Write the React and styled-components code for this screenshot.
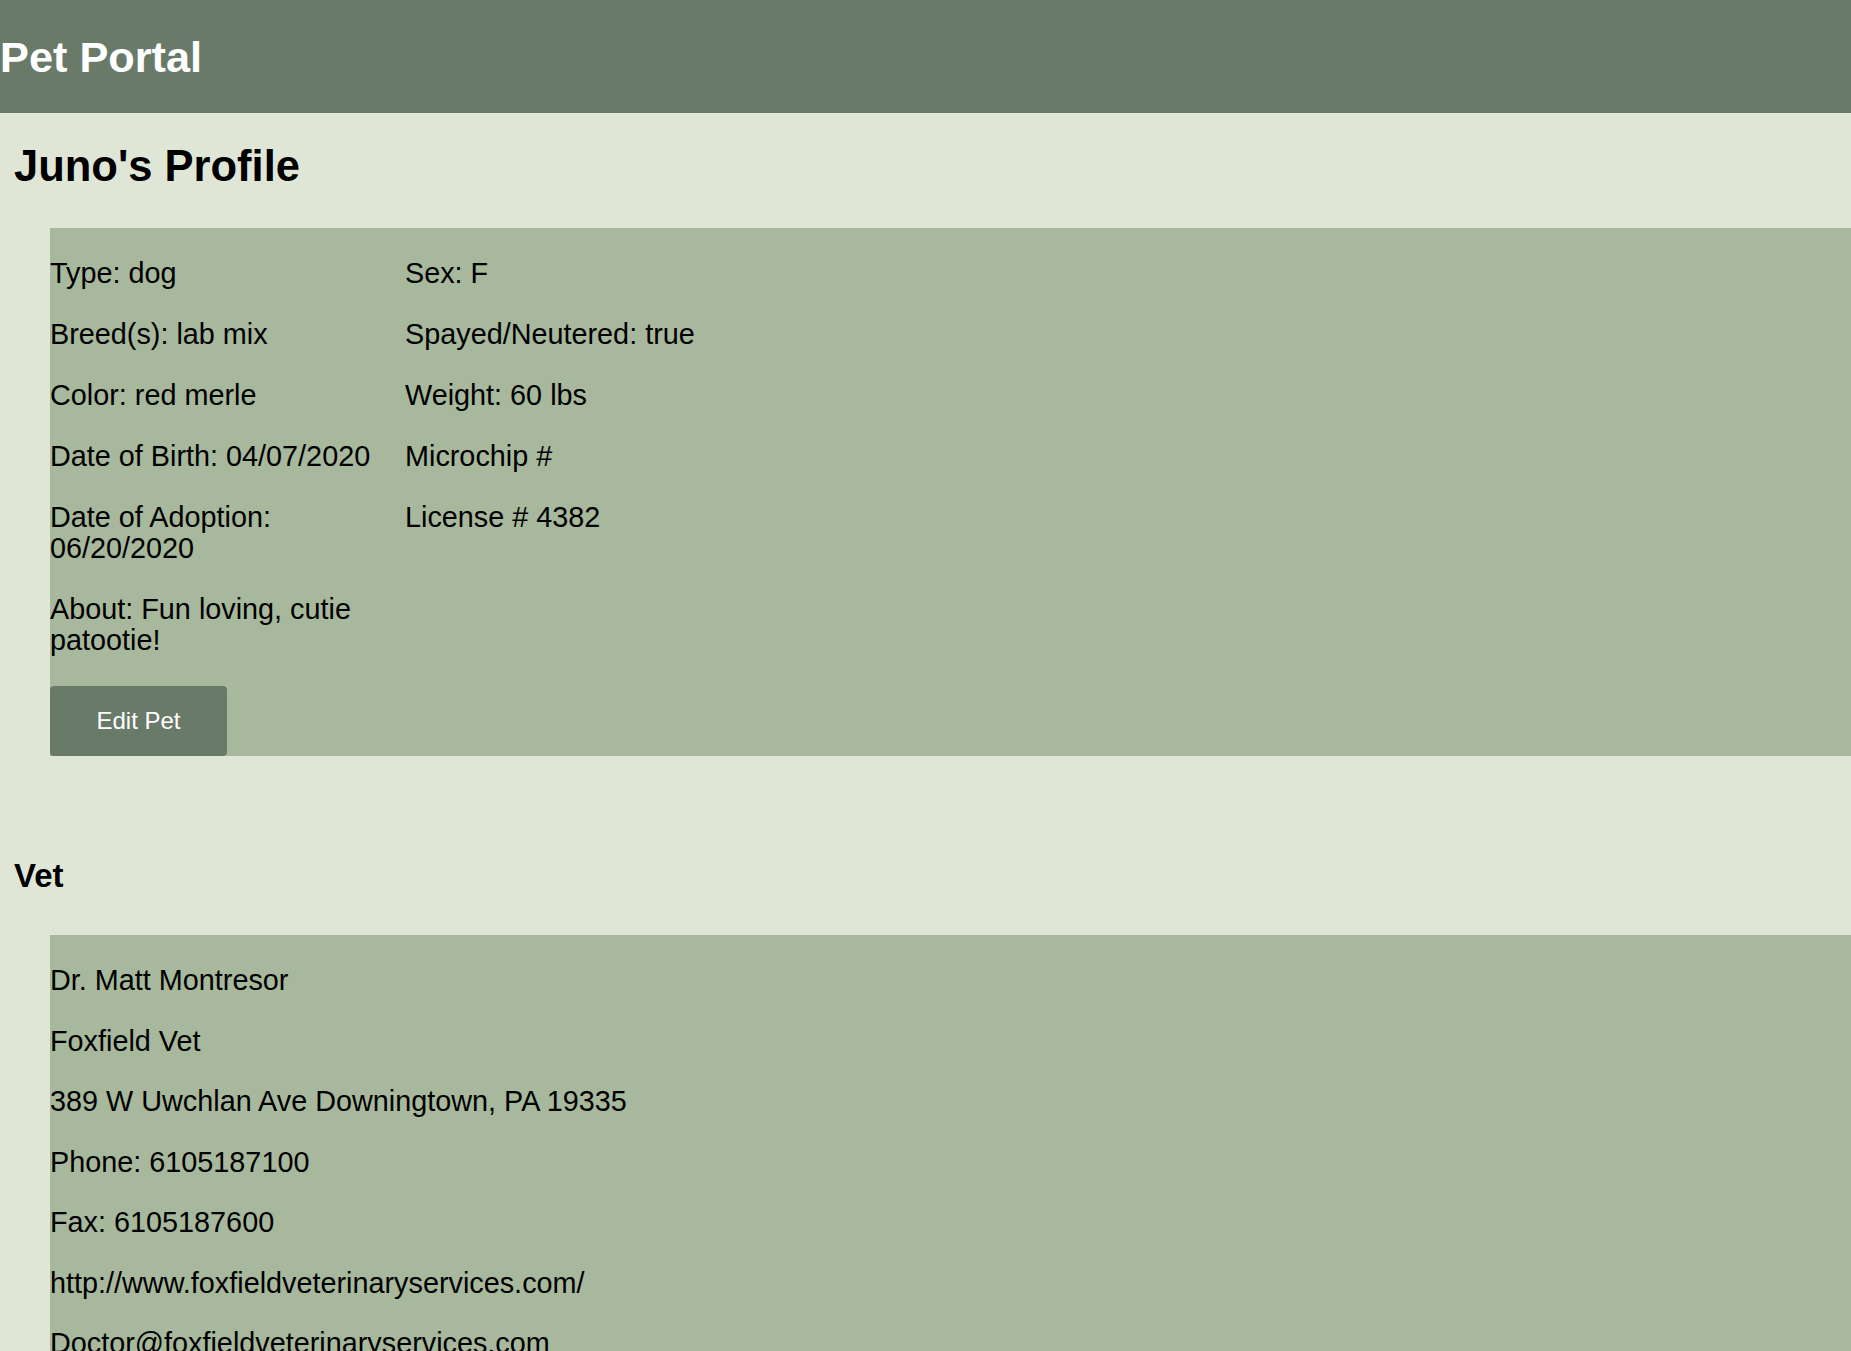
// Pet Portal > pet profile page
import React from "react";
import styled, { createGlobalStyle } from "styled-components";

const palette = {
  page: "#e0e6d6",
  panel: "#a7b89c",
  header: "#697a69",
  white: "#ffffff",
  black: "#000000",
};

const pet = {
  name: "Juno",
  left: [
    "Type: dog",
    "Breed(s): lab mix",
    "Color: red merle",
    "Date of Birth: 04/07/2020",
    "Date of Adoption: 06/20/2020",
    "About: Fun loving, cutie patootie!",
  ],
  right: [
    "Sex: F",
    "Spayed/Neutered: true",
    "Weight: 60 lbs",
    "Microchip #",
    "License # 4382",
  ],
};

const vet = [
  "Dr. Matt Montresor",
  "Foxfield Vet",
  "389 W Uwchlan Ave Downingtown, PA 19335",
  "Phone: 6105187100",
  "Fax: 6105187600",
  "http://www.foxfieldveterinaryservices.com/",
  "Doctor@foxfieldveterinaryservices.com",
];

const App = () => {
  return (
    <>
      <GlobalStyle />
      <Header>
        <SiteTitle>Pet Portal</SiteTitle>
      </Header>

      <Main>
        <ProfileTitle>{pet.name}'s Profile</ProfileTitle>

        <PetPanel>
          <Column>
            {pet.left.map((line) => (
              <Info key={line}>{line}</Info>
            ))}
            <EditButton>Edit Pet</EditButton>
          </Column>
          <Column>
            {pet.right.map((line) => (
              <Info key={line}>{line}</Info>
            ))}
          </Column>
        </PetPanel>

        <SectionTitle>Vet</SectionTitle>
        <VetPanel>
          {vet.map((line) => (
            <Info key={line}>{line}</Info>
          ))}
        </VetPanel>
      </Main>
    </>
  );
};

const GlobalStyle = createGlobalStyle`
  * {
    box-sizing: border-box;
  }
  body {
    margin: 0;
    background: ${palette.page};
    font-family: "Liberation Sans", Arial, sans-serif;
    color: ${palette.black};
    overflow-x: hidden;
  }
`;

const Header = styled.header`
  display: flex;
  align-items: center;
  height: 113px;
  padding-top: 2px;
  background: ${palette.header};
`;
const SiteTitle = styled.h1`
  margin: 0;
  font-size: 43.3px;
  font-weight: 700;
  color: ${palette.white};
`;

const Main = styled.main`
  display: flex;
  flex-direction: column;
  padding-left: 14px;
  padding-bottom: 40px;
`;
const ProfileTitle = styled.h1`
  margin: 29px 0 37.4px;
  font-size: 43.5px;
  font-weight: 700;
`;
const SectionTitle = styled.h2`
  margin: 101px 0 39.4px;
  font-size: 33px;
  font-weight: 700;
`;

const PetPanel = styled.section`
  display: grid;
  grid-template-columns: 355px 1fr;
  margin-left: 36px;
  background: ${palette.panel};
`;
const Column = styled.div`
  display: flex;
  flex-direction: column;
  align-items: flex-start;
  gap: 30px;
  padding-top: 29.5px;
`;
const Info = styled.p`
  margin: 0;
  font-size: 28.8px;
  line-height: 31px;
`;
const EditButton = styled.button`
  width: 177px;
  height: 70px;
  margin-top: 0.5px;
  padding: 0;
  border: none;
  border-radius: 4px;
  background: ${palette.header};
  color: ${palette.white};
  font-family: "Liberation Sans", Arial, sans-serif;
  font-size: 24px;
  cursor: pointer;
`;

const VetPanel = styled.section`
  display: flex;
  flex-direction: column;
  gap: 29.5px;
  padding-top: 30.6px;
  padding-bottom: 30px;
  margin-left: 36px;
  background: ${palette.panel};
`;

export default App;
